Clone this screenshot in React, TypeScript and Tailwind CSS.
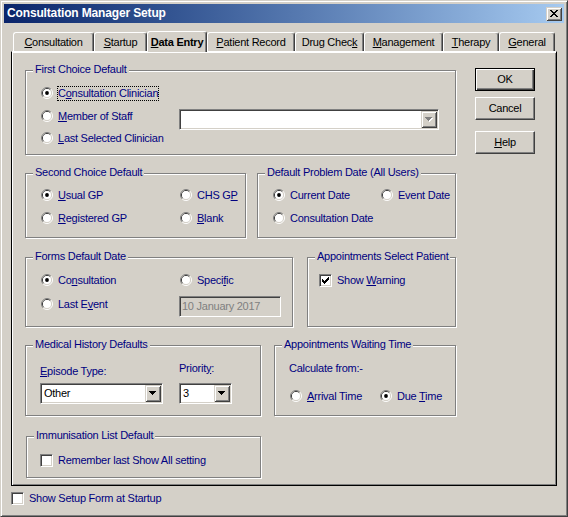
import React from 'react';

function Radio({ checked }: { checked?: boolean }) {
  return (
    <svg width="12" height="12" viewBox="0 0 12 12" className="shrink-0 block">
      <path d="M2.11 9.89A5.5 5.5 0 0 1 9.89 2.11" fill="none" stroke="#808080" />
      <path d="M9.89 2.11A5.5 5.5 0 0 1 2.11 9.89" fill="none" stroke="#ffffff" />
      <path d="M2.82 9.18A4.5 4.5 0 0 1 9.18 2.82" fill="none" stroke="#404040" />
      <path d="M9.18 2.82A4.5 4.5 0 0 1 2.82 9.18" fill="none" stroke="#d4d0c8" />
      <circle cx="6" cy="6" r="4" fill="#ffffff" />
      {checked && <circle cx="6" cy="6" r="1.9" fill="#000000" />}
    </svg>
  );
}

const checkPixels: [number, number, number][] = [
  [6, 0, 1],
  [5, 1, 2],
  [0, 2, 1],
  [4, 2, 3],
  [0, 3, 2],
  [3, 3, 3],
  [0, 4, 5],
  [1, 5, 3],
  [2, 6, 1],
];

function Check({ checked }: { checked?: boolean }) {
  return (
    <div className="w-[13px] h-[13px] shrink-0 bg-white border border-t-[#808080] border-l-[#808080] border-b-white border-r-white shadow-[inset_1px_1px_0_#404040,inset_-1px_-1px_0_#d4d0c8] flex items-center justify-center">
      {checked && (
        <svg width="7" height="7" viewBox="0 0 7 7" className="block" shapeRendering="crispEdges">
          {checkPixels.map(([x, y, w], i) => (
            <rect key={i} x={x} y={y} width={w} height={1} fill="#000" />
          ))}
        </svg>
      )}
    </div>
  );
}

const arrowRows: [number, number][] = [
  [0, 7],
  [1, 5],
  [2, 3],
  [3, 1],
];

function Arrow({ disabled }: { disabled?: boolean }) {
  return (
    <svg width="8" height="5" viewBox="0 0 8 5" className="block" shapeRendering="crispEdges">
      {disabled &&
        arrowRows.map(([y, w], i) => (
          <rect key={'s' + i} x={y + 1} y={y + 1} width={w} height={1} fill="#ffffff" />
        ))}
      {arrowRows.map(([y, w], i) => (
        <rect key={i} x={y} y={y} width={w} height={1} fill={disabled ? '#808080' : '#000000'} />
      ))}
    </svg>
  );
}

function Combo({ className, value, disabled }: { className: string; value?: string; disabled?: boolean }) {
  return (
    <div
      className={`h-[21px] shrink-0 bg-white flex p-[1px] border border-t-[#808080] border-l-[#808080] border-b-white border-r-white shadow-[inset_1px_1px_0_#404040,inset_-1px_-1px_0_#d4d0c8] ${className}`}
    >
      <div className="flex-1 flex items-center pl-[2px] text-black leading-[13px] whitespace-nowrap">{value}</div>
      <div className="w-[16px] h-[17px] shrink-0 flex items-center justify-center bg-[#d4d0c8] shadow-[inset_1px_1px_0_#d4d0c8,inset_-1px_-1px_0_#404040,inset_2px_2px_0_#ffffff,inset_-2px_-2px_0_#808080]">
        <Arrow disabled={disabled} />
      </div>
    </div>
  );
}

function RadioLabel({ children, focus }: { children: React.ReactNode; focus?: boolean }) {
  return (
    <span
      className={`ml-[4px] border leading-[13px] whitespace-nowrap ${focus ? 'border-dotted border-black' : 'border-transparent'}`}
    >
      {children}
    </span>
  );
}

function RadioOpt({ checked, focus, children }: { checked?: boolean; focus?: boolean; children: React.ReactNode }) {
  return (
    <div className="flex items-center h-[16px]">
      <Radio checked={checked} />
      <RadioLabel focus={focus}>{children}</RadioLabel>
    </div>
  );
}

function CheckOpt({ checked, children }: { checked?: boolean; children: React.ReactNode }) {
  return (
    <div className="flex items-center h-[16px]">
      <Check checked={checked} />
      <span className="ml-[5px] leading-[13px] whitespace-nowrap">{children}</span>
    </div>
  );
}

function Group({ title, className, children }: { title: string; className: string; children: React.ReactNode }) {
  return (
    <div className={`relative shrink-0 border border-[#808080] shadow-[inset_1px_1px_0_#ffffff,1px_1px_0_#ffffff] ${className}`}>
      <span className="absolute left-[7px] top-[-8px] px-[2px] bg-[#d4d0c8] leading-[13px] whitespace-nowrap">{title}</span>
      {children}
    </div>
  );
}

const closePixels: [number, number, number][] = [
  [0, 0, 2],
  [6, 0, 2],
  [1, 1, 2],
  [5, 1, 2],
  [2, 2, 4],
  [3, 3, 2],
  [2, 4, 4],
  [1, 5, 2],
  [5, 5, 2],
  [0, 6, 2],
  [6, 6, 2],
];

type Tab = { pre: string; u: string; post: string; w: string; selected?: boolean };

const tabs: Tab[] = [
  { pre: '', u: 'C', post: 'onsultation', w: 'w-[81px]' },
  { pre: '', u: 'S', post: 'tartup', w: 'w-[53px]' },
  { pre: '', u: 'D', post: 'ata Entry', w: 'w-[60px]', selected: true },
  { pre: '', u: 'P', post: 'atient Record', w: 'w-[88px]' },
  { pre: 'Drug Chec', u: 'k', post: '', w: 'w-[69px]' },
  { pre: '', u: 'M', post: 'anagement', w: 'w-[79px]' },
  { pre: '', u: 'T', post: 'herapy', w: 'w-[56px]' },
  { pre: '', u: 'G', post: 'eneral', w: 'w-[56px]' },
];

export default function App() {
  return (
    <div className="w-[568px] h-[517px] overflow-hidden bg-[#d4d0c8] border border-t-[#d4d0c8] border-l-[#d4d0c8] border-b-[#404040] border-r-[#404040] shadow-[inset_1px_1px_0_#ffffff,inset_-1px_-1px_0_#808080] p-[3px] font-['Liberation_Sans',Arial,sans-serif] text-[11px] tracking-[-0.25px] text-[#000080]">
      {/* Title bar */}
      <div className="h-[19px] flex items-center bg-linear-to-r from-[#0a246a] to-[#a6caf0] pl-[3px] pr-[2px]">
        <span className="text-white font-bold text-[12px] tracking-[-0.15px] leading-[19px] whitespace-nowrap">
          Consultation Manager Setup
        </span>
        <div className="ml-auto w-[16px] h-[14px] flex items-center justify-center bg-[#d4d0c8] shadow-[inset_1px_1px_0_#d4d0c8,inset_-1px_-1px_0_#404040,inset_2px_2px_0_#ffffff,inset_-2px_-2px_0_#808080]">
          <svg width="8" height="7" viewBox="0 0 8 7" className="block" shapeRendering="crispEdges">
            {closePixels.map(([x, y, w], i) => (
              <rect key={i} x={x} y={y} width={w} height={1} fill="#000" />
            ))}
          </svg>
        </div>
      </div>

      {/* Tabs */}
      <div className="mt-[8px] ml-[9px] h-[20px] flex items-end text-black">
        {tabs.map((t, i) =>
          t.selected ? (
            <div
              key={i}
              className={`relative z-10 ${t.w} h-[21px] mb-[-1px] shrink-0 flex items-center justify-center bg-[#d4d0c8] border-t border-l border-r border-t-white border-l-white border-r-[#404040] rounded-t-[3px] shadow-[inset_-1px_0_0_#808080] font-bold whitespace-nowrap`}
            >
              {t.pre}
              <u>{t.u}</u>
              {t.post}
            </div>
          ) : (
            <div
              key={i}
              className={`${t.w} h-[19px] shrink-0 flex items-center justify-center border-t border-l border-r border-t-white border-l-white border-r-[#404040] rounded-t-[3px] shadow-[inset_-1px_0_0_#808080] whitespace-nowrap`}
            >
              {t.pre}
              <u>{t.u}</u>
              {t.post}
            </div>
          )
        )}
      </div>

      {/* Tab panel */}
      <div className="ml-[7px] w-[546px] h-[435px] border border-t-white border-l-black border-r-black border-b-black shadow-[inset_1px_1px_0_#ffffff,inset_-1px_-1px_0_#808080] flex items-start pl-[13px] gap-[19px]">
        <div className="pt-[18px] w-[431px] flex flex-col">
          <Group title="First Choice Default" className="w-[431px] h-[85px] pl-[15px] pt-[14px]">
            <RadioOpt checked focus>
              C<u>o</u>nsultation Clinician
            </RadioOpt>
            <div className="mt-[7px] flex h-[16px]">
              <div className="w-[138px] flex items-center">
                <Radio />
                <RadioLabel>
                  <u>M</u>ember of Staff
                </RadioLabel>
              </div>
              <Combo className="w-[260px] self-start mt-[1px]" disabled />
            </div>
            <div className="mt-[6px]">
              <RadioOpt>
                <u>L</u>ast Selected Clinician
              </RadioOpt>
            </div>
          </Group>

          <div className="mt-[18px] flex gap-[11px]">
            <Group title="Second Choice Default" className="w-[221px] h-[65px] pl-[15px] pt-[13px]">
              <div className="grid grid-cols-[139px_auto] gap-y-[7px]">
                <RadioOpt checked>
                  <u>U</u>sual GP
                </RadioOpt>
                <RadioOpt>
                  CHS G<u>P</u>
                </RadioOpt>
                <RadioOpt>
                  <u>R</u>egistered GP
                </RadioOpt>
                <RadioOpt>
                  <u>B</u>lank
                </RadioOpt>
              </div>
            </Group>
            <Group title="Default Problem Date (All Users)" className="w-[199px] h-[65px] pl-[15px] pt-[13px]">
              <div className="grid grid-cols-[108px_auto] gap-y-[7px]">
                <RadioOpt checked>Current Date</RadioOpt>
                <RadioOpt>Event Date</RadioOpt>
                <RadioOpt>Consultation Date</RadioOpt>
              </div>
            </Group>
          </div>

          <div className="mt-[19px] flex gap-[14px]">
            <Group title="Forms Default Date" className="w-[268px] h-[70px] pl-[15px] pt-[14px]">
              <div className="grid grid-cols-[139px_auto] gap-y-[8px]">
                <RadioOpt checked>
                  Co<u>n</u>sultation
                </RadioOpt>
                <RadioOpt>
                  Speci<u>f</u>ic
                </RadioOpt>
                <RadioOpt>
                  Last E<u>v</u>ent
                </RadioOpt>
                <div className="h-[16px]">
                  <div className="ml-[-1px] w-[102px] h-[21px] bg-[#d4d0c8] flex items-center pl-[2px] text-[#808080] leading-[13px] whitespace-nowrap border border-t-[#808080] border-l-[#808080] border-b-white border-r-white shadow-[inset_1px_1px_0_#404040,inset_-1px_-1px_0_#d4d0c8]">
                    10 January 2017
                  </div>
                </div>
              </div>
            </Group>
            <Group title="Appointments Select Patient" className="w-[149px] h-[70px] pl-[11px] pt-[14px]">
              <CheckOpt checked>
                Show <u>W</u>arning
              </CheckOpt>
            </Group>
          </div>

          <div className="mt-[18px] flex gap-[13px]">
            <Group title="Medical History Defaults" className="w-[236px] h-[71px] pl-[14px] pt-[16px] flex items-start">
              <div className="w-[139px] shrink-0">
                <div className="mt-[3px] leading-[13px] whitespace-nowrap">
                  <u>E</u>pisode Type:
                </div>
                <Combo className="mt-[5px] w-[123px]" value="Other" />
              </div>
              <div>
                <div className="leading-[13px] whitespace-nowrap">
                  Priorit<u>y</u>:
                </div>
                <Combo className="mt-[8px] w-[53px]" value="3" />
              </div>
            </Group>
            <Group title="Appointments Waiting Time" className="w-[182px] h-[71px] pl-[14px] pt-[16px]">
              <div className="leading-[13px] whitespace-nowrap">Calculate from:-</div>
              <div className="mt-[13px] ml-[1px] grid grid-cols-[90px_auto]">
                <RadioOpt>
                  <u>A</u>rrival Time
                </RadioOpt>
                <RadioOpt checked>
                  Due <u>T</u>ime
                </RadioOpt>
              </div>
            </Group>
          </div>

          <Group title="Immunisation List Default" className="mt-[20px] ml-[1px] w-[235px] h-[42px] pl-[13px] pt-[15px]">
            <CheckOpt>Remember last Show All setting</CheckOpt>
          </Group>
        </div>

        <div className="pt-[16px] flex flex-col w-[60px] shrink-0 text-black">
          <button
            type="button"
            className="w-[60px] h-[23px] bg-[#d4d0c8] border border-black shadow-[inset_1px_1px_0_#ffffff,inset_-1px_-1px_0_#404040,inset_-2px_-2px_0_#808080] flex items-center justify-center leading-[13px]"
          >
            OK
          </button>
          <button
            type="button"
            className="mt-[6px] w-[60px] h-[23px] bg-[#d4d0c8] border border-t-white border-l-white border-b-[#404040] border-r-[#404040] shadow-[inset_-1px_-1px_0_#808080] flex items-center justify-center leading-[13px]"
          >
            Cancel
          </button>
          <button
            type="button"
            className="mt-[11px] w-[60px] h-[23px] bg-[#d4d0c8] border border-t-white border-l-white border-b-[#404040] border-r-[#404040] shadow-[inset_-1px_-1px_0_#808080] flex items-center justify-center leading-[13px]"
          >
            <u>H</u>elp
          </button>
        </div>
      </div>

      {/* Bottom checkbox */}
      <div className="mt-[4px] ml-[7px]">
        <CheckOpt>Show Setup Form at Startup</CheckOpt>
      </div>
    </div>
  );
}
